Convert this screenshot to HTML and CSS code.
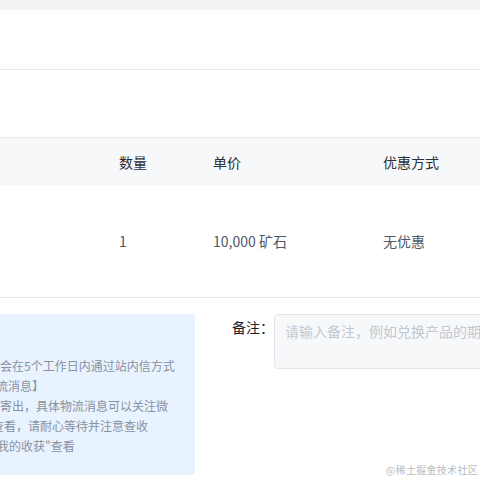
FILE: index.html
```html
<!DOCTYPE html>
<html lang="zh-CN">
<head>
<meta charset="utf-8">
<title>确认订单</title>
<link rel="stylesheet" href="styles.css">
</head>
<body>
<div class="page">
  <div class="band"></div>
  <div class="row row-a"></div>
  <div class="row row-b"></div>
  <div class="table">
    <div class="thead">
      <div class="cell c-prod"></div>
      <div class="cell c-qty">数量</div>
      <div class="cell c-price">单价</div>
      <div class="cell c-disc">优惠方式</div>
    </div>
    <div class="tbody">
      <div class="cell c-prod"></div>
      <div class="cell c-qty">1</div>
      <div class="cell c-price">10,000 矿石</div>
      <div class="cell c-disc">无优惠</div>
    </div>
  </div>
  <div class="bottom">
    <div class="tips">
      <div class="tip-line">会在5个工作日内通过站内信方式</div>
      <div class="tip-line l2">流消息】</div>
      <div class="tip-line">寄出，具体物流消息可以关注微</div>
      <div class="tip-line l4">查看，请耐心等待并注意查收</div>
      <div class="tip-line l5">我的收获"查看</div>
    </div>
    <div class="remark">
      <div class="remark-label">备注：</div>
      <textarea class="remark-input" placeholder="请输入备注，例如兑换产品的期望颜色、尺码等"></textarea>
    </div>
  </div>
  <div class="watermark">@稀土掘金技术社区</div>
</div>
</body>
</html>
```

FILE: styles.css
```css
html, body {
  margin: 0;
  padding: 0;
  background: #ffffff;
  overflow: hidden;
}
body {
  font-family: "Noto Sans CJK SC", "Noto Sans", sans-serif;
  font-size: 14px;
  color: #2b2f36;
}
.page {
  position: relative;
  width: 480px;
  height: 480px;
  overflow: hidden;
}
.band {
  height: 10px;
  background: #f2f3f5;
}
.row {
  border-bottom: 1px solid #e6e7eb;
}
.row-a { height: 59px; }
.row-b { height: 67px; }
.thead, .tbody {
  display: grid;
  grid-template-columns: 119px 94px 170px 1fr;
  align-items: center;
}
.thead {
  height: 47px;
  background: #f7f8fa;
  color: #2b2f36;
}
.tbody {
  height: 112px;
  border-bottom: 1px solid #e6e7eb;
  color: #515767;
}
.cell {
  line-height: 20px;
  white-space: nowrap;
}
.bottom {
  display: flex;
  align-items: flex-start;
  padding-top: 16px;
}
.tips {
  box-sizing: border-box;
  flex: none;
  width: 215px;
  margin-left: -20px;
  padding: 42px 20px 19px 20px;
  background: #e8f3ff;
  border-radius: 4px;
  font-size: 12px;
  color: #8a919f;
}
.tip-line {
  line-height: 20px;
  white-space: nowrap;
}
.tip-line.l2 { text-indent: -4px; }
.tip-line.l4 { text-indent: -8px; }
.tip-line.l5 { text-indent: -3px; }
.remark {
  display: flex;
  align-items: flex-start;
  flex: none;
  margin-left: 37px;
}
.remark-label {
  line-height: 20px;
  margin-top: 3px;
  color: #1d2129;
  white-space: nowrap;
}
.remark-input {
  box-sizing: border-box;
  flex: none;
  width: 520px;
  height: 55px;
  margin: 0;
  padding: 6px 10px;
  border: 1px solid #e4e6eb;
  border-radius: 4px;
  background: #f7f8fa;
  font-family: "Noto Sans CJK SC", "Noto Sans", sans-serif;
  font-size: 14px;
  line-height: 20px;
  color: #252933;
  resize: none;
  outline: none;
}
.remark-input::placeholder {
  color: #c2c8d1;
}
.watermark {
  position: absolute;
  right: 2px;
  bottom: 4px;
  font-family: "Noto Sans CJK SC", sans-serif;
  font-size: 10px;
  line-height: 12px;
  color: #b8bcc4;
  letter-spacing: 0.3px;
}
```
